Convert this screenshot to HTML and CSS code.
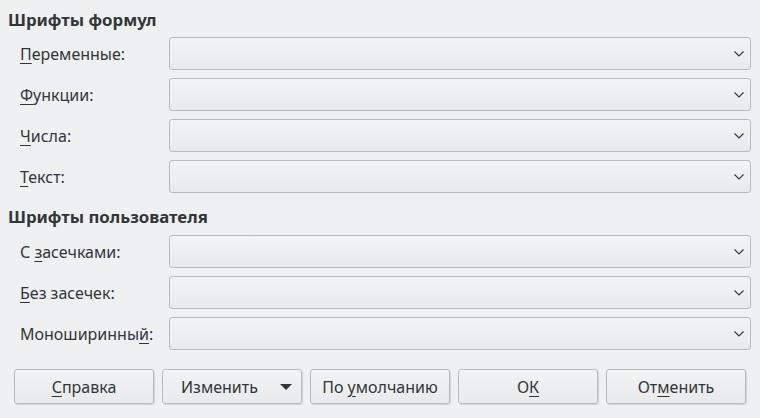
FILE: index.html
```html
<!DOCTYPE html>
<html lang="ru">
<head>
<meta charset="utf-8">
<link rel="stylesheet" href="styles.css">
</head>
<body>
<div class="dialog">
  <div class="heading first">Шрифты формул</div>
  <div class="rows">
    <div class="label"><span><u>П</u>еременные:</span></div>
    <div class="combo"><svg class="chev" width="10" height="6" viewBox="0 0 10 6"><path d="M0.5 0.5 L5 5 L9.5 0.5" fill="none" stroke="#31363b" stroke-width="1.1"/></svg></div>
    <div class="label"><span><u>Ф</u>ункции:</span></div>
    <div class="combo"><svg class="chev" width="10" height="6" viewBox="0 0 10 6"><path d="M0.5 0.5 L5 5 L9.5 0.5" fill="none" stroke="#31363b" stroke-width="1.1"/></svg></div>
    <div class="label"><span><u>Ч</u>исла:</span></div>
    <div class="combo"><svg class="chev" width="10" height="6" viewBox="0 0 10 6"><path d="M0.5 0.5 L5 5 L9.5 0.5" fill="none" stroke="#31363b" stroke-width="1.1"/></svg></div>
    <div class="label"><span><u>Т</u>екст:</span></div>
    <div class="combo"><svg class="chev" width="10" height="6" viewBox="0 0 10 6"><path d="M0.5 0.5 L5 5 L9.5 0.5" fill="none" stroke="#31363b" stroke-width="1.1"/></svg></div>
  </div>
  <div class="heading second">Шрифты пользователя</div>
  <div class="rows">
    <div class="label"><span>С <u>з</u>асечками:</span></div>
    <div class="combo"><svg class="chev" width="10" height="6" viewBox="0 0 10 6"><path d="M0.5 0.5 L5 5 L9.5 0.5" fill="none" stroke="#31363b" stroke-width="1.1"/></svg></div>
    <div class="label"><span><u>Б</u>ез засечек:</span></div>
    <div class="combo"><svg class="chev" width="10" height="6" viewBox="0 0 10 6"><path d="M0.5 0.5 L5 5 L9.5 0.5" fill="none" stroke="#31363b" stroke-width="1.1"/></svg></div>
    <div class="label"><span>Моноширинны<u>й</u>:</span></div>
    <div class="combo"><svg class="chev" width="10" height="6" viewBox="0 0 10 6"><path d="M0.5 0.5 L5 5 L9.5 0.5" fill="none" stroke="#31363b" stroke-width="1.1"/></svg></div>
  </div>
  <div class="buttons">
    <div class="btn"><span><u>С</u>правка</span></div>
    <div class="btn menu"><span>Изменить</span><svg width="12" height="6" viewBox="0 0 12 6"><path d="M0 0 L12 0 L6 6 Z" fill="#31363b"/></svg></div>
    <div class="btn"><span>По <u>у</u>молчанию</span></div>
    <div class="btn"><span>О<u>К</u></span></div>
    <div class="btn"><span>От<u>м</u>енить</span></div>
  </div>
</div>
</body>
</html>
```
FILE: styles.css
```css
html, body {
  margin: 0;
  padding: 0;
  background: #eff0f1;
}
body {
  font-family: "Noto Sans", "Open Sans", sans-serif;
  font-size: 16px;
  color: #31363b;
  width: 760px;
  height: 418px;
  overflow: hidden;
}
.dialog {
  padding: 0 9px 0 8px;
  display: flex;
  flex-direction: column;
}
.heading {
  font-weight: bold;
  font-size: 16.8px;
  line-height: 20px;
  height: 20px;
}
.heading.first {
  margin-top: 10px;
  margin-bottom: 7px;
}
.heading.second {
  margin-top: 14px;
  margin-bottom: 8px;
}
.rows {
  display: grid;
  grid-template-columns: 149px 1fr;
  row-gap: 8px;
  padding-left: 12px;
}
.label {
  display: flex;
  align-items: center;
  height: 33px;
  white-space: nowrap;
}
u {
  text-decoration-thickness: 1px;
  text-underline-offset: 3px;
}
.combo {
  box-sizing: border-box;
  height: 33px;
  border: 1px solid #b9babb;
  border-radius: 3px;
  background: linear-gradient(#f2f3f4, #e9eaeb);
  display: flex;
  align-items: center;
  justify-content: flex-end;
  padding-right: 6px;
}
.chev {
  display: block;
}
.buttons {
  display: flex;
  gap: 8px;
  margin-top: 19px;
  padding-left: 6px;
}
.btn {
  box-sizing: border-box;
  width: 140px;
  height: 35px;
  border: 1px solid #b9babb;
  border-radius: 3px;
  background: linear-gradient(#f2f3f4, #e9eaeb);
  box-shadow: 1px 1px 1px rgba(0,0,0,0.12);
  display: flex;
  align-items: center;
  justify-content: center;
  white-space: nowrap;
}
.btn.menu {
  justify-content: space-between;
  padding: 0 9px 0 18px;
}
.btn.menu svg {
  display: block;
}
```
